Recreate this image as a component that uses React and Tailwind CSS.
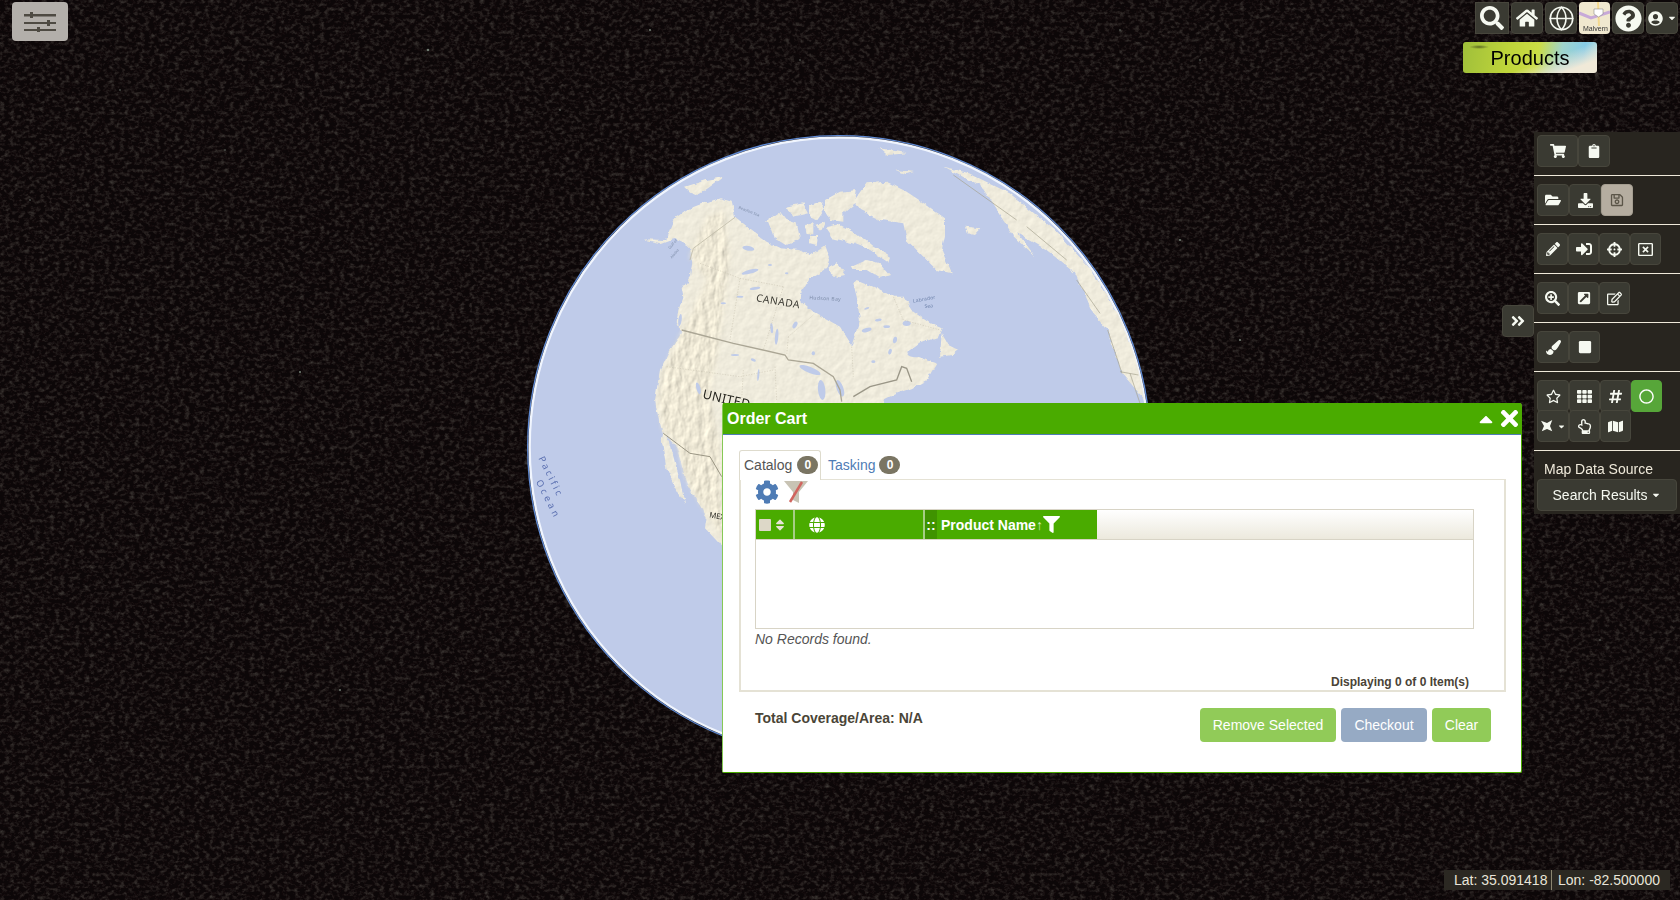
import { Globe } from 'lucide-react';
import {
    FaSearch, FaHome, FaQuestionCircle, FaUserCircle, FaCaretDown, FaCaretUp, FaTimes, FaSort, FaCog, FaFilter, FaGlobe,
    FaShoppingCart, FaClipboard, FaFolderOpen, FaDownload, FaRegSave, FaPencilAlt, FaSignInAlt, FaCrosshairs, FaRegWindowClose,
    FaSearchPlus, FaExternalLinkSquareAlt, FaRegEdit, FaPaintBrush, FaStop, FaRegStar, FaTh, FaHashtag, FaRegCircle,
    FaRegHandPointUp, FaMap, FaAngleDoubleRight,
} from 'react-icons/fa';

const stars = [
    [428, 50, 1.3], [650, 30, 1.1], [225, 150, 0.8], [120, 90, 0.8], [300, 372, 1.1], [130, 330, 0.8], [60, 470, 0.8], [340, 690, 1],
    [1200, 60, 0.8], [1330, 120, 0.8], [1240, 340, 1.1], [1430, 300, 0.8], [1360, 590, 0.8], [1600, 640, 0.8], [210, 600, 0.8], [460, 800, 0.8],
    [980, 850, 0.8], [1120, 30, 0.8], [800, 60, 0.8], [30, 200, 0.8], [560, 110, 0.8], [1180, 240, 1.1], [1300, 800, 0.8], [90, 760, 0.8],
];

const land = [
    // north america
    'M10,178 L75,180 L100,120 L150,85 L190,70 L240,55 L275,65 L285,110 L340,155 L380,185 L420,205 L480,210 L510,225 L555,195 L570,235 L560,265 L510,295 L480,345 L480,360 L520,395 L600,440 L635,495 L640,480 L660,420 L650,350 L640,310 L650,300 L700,320 L760,350 L790,350 L820,395 L870,430 L905,445 L895,470 L840,490 L800,520 L860,540 L890,550 L860,600 L815,625 L770,640 L730,660 L800,800 L300,1120 L245,1098 L195,1045 L200,1010 L140,910 L110,800 L90,780 L68,760 L50,690 L45,660 L60,570 L90,510 L125,460 L110,430 L115,390 L130,350 L125,325 L150,290 L155,240 L150,205 L140,195 L100,175 L60,190 Z',
    'M70,760 L90,790 L120,900 L135,975 L110,930 L80,870 L65,780 Z',
    // arctic islands
    'M135,20 L200,0 L250,-10 L210,20 L175,45 L150,35 Z',
    'M555,145 L600,135 L650,160 L700,200 L750,230 L745,245 L690,210 L640,190 L575,175 Z',
    'M635,260 L680,240 L720,250 L750,285 L720,295 L680,270 L640,270 Z',
    'M565,260 L590,250 L615,285 L590,290 L570,285 Z',
    'M375,125 L420,95 L440,120 L470,130 L480,175 L440,195 L400,170 L385,130 Z',
    'M440,80 L490,70 L505,100 L460,110 Z',
    'M495,135 L520,130 L520,160 L500,160 Z',
    'M510,165 L535,165 L530,195 L510,190 Z',
    'M525,135 L555,125 L545,150 Z',
    'M555,60 L600,35 L650,30 L645,70 L610,100 L610,125 L570,120 L555,95 Z',
    'M510,75 L540,65 L555,85 L530,120 L510,110 Z',
    // greenland, newfoundland, iceland
    'M640,65 L680,10 L740,5 L800,35 L860,75 L915,115 L915,170 L905,210 L935,280 L890,270 L845,225 L800,180 L790,130 L720,120 L660,90 Z',
    'M905,460 L925,495 L955,510 L935,525 L900,530 Z',
    'M975,140 L1024,145 L1005,165 L981,160 Z',
    // europe along the limb
    'M913,-40 L987,-20 L1109,40 L1244,150 L1354,270 L1440,410 L1501,570 L1532,680 L1446,580 L1403,450 L1354,390 L1305,280 L1220,210 L1134,160 L1183,230 L1122,170 L1024,20 Z',
    'M718,-95 L803,-80 L742,-75 Z',
    'M766,-30 L821,-25 L797,-18 Z',
];

const lakes = [
    [330, 275, 26, 6, -15], [325, 205, 18, 7, 10], [345, 325, 16, 4, -10], [410, 470, 5, 24, 5], [395, 445, 4, 15, -5], [465, 435, 6, 11, 30],
    [285, 525, 12, 3, 0], [340, 540, 8, 4, 20], [355, 585, 3, 18, 5], [510, 570, 34, 9, 22], [545, 630, 11, 30, -6], [600, 625, 10, 26, -20],
    [800, 430, 12, 8, 0], [680, 450, 15, 6, -15], [715, 420, 10, 4, -10], [700, 545, 6, 4, 0], [750, 515, 5, 9, 20], [820, 525, 18, 6, 10],
    [120, 420, 5, 18, 8], [150, 260, 5, 20, 12], [680, 385, 8, 3, -20], [740, 440, 10, 4, 0], [390, 255, 6, 3, 0], [440, 280, 5, 3, 0],
    [520, 520, 5, 6, 0], [175, 625, 6, 18, -15], [765, 480, 6, 10, 10], [250, 370, 8, 3, 0], [300, 350, 10, 3, 0],
];

function GlobeMap() {
    return (
        <svg viewBox="-360 -150 1920 1920" className="absolute left-[520px] top-[130px] h-[640px] w-[640px] font-['Noto_Sans',sans-serif]">
            <defs>
                <clipPath id="disc"><circle cx="597" cy="801" r="927" /></clipPath>
                <filter id="relief" x="-5%" y="-5%" width="110%" height="110%" colorInterpolationFilters="sRGB">
                    <feTurbulence type="fractalNoise" baseFrequency="0.04" numOctaves="4" seed="5" result="noise" />
                    <feDisplacementMap in="SourceGraphic" in2="noise" scale="14" xChannelSelector="R" yChannelSelector="G" result="coast" />
                    <feDiffuseLighting in="noise" surfaceScale="0.7" diffuseConstant="1.15" lightingColor="#f0ecdd" result="light">
                        <feDistantLight azimuth="225" elevation="60" />
                    </feDiffuseLighting>
                    <feComposite in="light" in2="coast" operator="in" />
                </filter>
                <filter id="rockies" x="-5%" y="-5%" width="110%" height="110%" colorInterpolationFilters="sRGB">
                    <feGaussianBlur in="SourceGraphic" stdDeviation="8" result="soft" />
                    <feTurbulence type="fractalNoise" baseFrequency="0.05 0.025" numOctaves="4" seed="9" result="noise" />
                    <feDiffuseLighting in="noise" surfaceScale="2.4" diffuseConstant="1.15" lightingColor="#efe9d6" result="light">
                        <feDistantLight azimuth="225" elevation="60" />
                    </feDiffuseLighting>
                    <feComposite in="light" in2="soft" operator="in" />
                </filter>
            </defs>
            <circle cx="597" cy="801" r="934" fill="none" stroke="#5f8ad4" strokeWidth="4" />
            <circle cx="597" cy="801" r="928" fill="#bfcbe9" stroke="#f0f5fe" strokeWidth="7" />
            <g clipPath="url(#disc)">
                <g filter="url(#relief)" fill="#000">
                    {land.map((d) => <path key={d} d={d} />)}
                </g>
                <path filter="url(#rockies)" fill="#000" d="M120,470 L200,300 L150,230 L200,110 L250,90 L270,230 L240,480 L210,640 L240,800 L250,1080 L200,1000 L140,900 L110,790 L70,750 L55,670 L70,570 Z" />
                <g fill="#bfcbe9">
                    {lakes.map(([cx, cy, rx, ry, rot]) => (
                        <ellipse key={`${cx}-${cy}`} cx={cx} cy={cy} rx={rx} ry={ry} transform={`rotate(${rot} ${cx} ${cy})`} />
                    ))}
                </g>
                <g fill="none">
                    <path d="M125,450 L280,490 L435,525 L445,540 L520,550 L580,590 L600,630 L605,665" stroke="#aba695" strokeWidth="4" />
                    <path d="M640,650 L690,620 L770,600 L785,560 L800,565 L815,605" stroke="#9a9687" strokeWidth="4" />
                    <path d="M285,112 L160,205 L150,240" stroke="#c2bdaa" strokeWidth="2.500" />
                    <path d="M70,760 L150,820 L210,830 L245,890" stroke="#9a9583" strokeWidth="3" />
                    <path d="M180,250 L300,295 L430,320 M300,295 L270,480 M430,320 L370,510 M445,470 L520,405 M445,470 L440,525 M635,500 L640,590 M760,350 L790,420 L900,450 M80,560 L300,590 L400,570 M310,570 L305,660 M405,560 L410,660" stroke="#c6c1ae" strokeWidth="1.500" strokeDasharray="4 4" />
                    <path d="M1403,450 L1446,580 M1440,575 L1495,585 M1470,580 L1500,670 M940,-15 L1130,120 M1160,140 L1280,240 M1310,300 L1380,400" stroke="#a5a18e" strokeWidth="2" />
                </g>
                <text x="347" y="364" fontSize="31" fill="#3b3a33" transform="rotate(9 347 364)" letterSpacing="1.500">CANADA</text>
                <text x="508" y="358" fontSize="15" fill="#7d8ca8" transform="rotate(3 508 358)" letterSpacing="1">Hudson Bay</text>
                <text x="820" y="368" fontSize="15" fill="#6f83ab" transform="rotate(-10 820 368)" letterSpacing="0.500">Labrador</text>
                <text x="854" y="384" fontSize="15" fill="#6f83ab" transform="rotate(-6 854 384)">Sea</text>
                <text x="90" y="208" fontSize="11" fill="#7d8ca8" transform="rotate(-50 90 208)">Gulf of</text>
                <text x="96" y="236" fontSize="11" fill="#7d8ca8" transform="rotate(-50 96 236)">Alaska</text>
                <text x="295" y="85" fontSize="11" fill="#7d8ca8" transform="rotate(22 295 85)">Beaufort Sea</text>
                <text x="186" y="654" fontSize="38" fill="#26251f" transform="rotate(13 186 654)" letterSpacing="1">UNITED</text>
                <text x="207" y="1012" fontSize="23" fill="#26251f" transform="rotate(10 207 1012)">MEXICO</text>
                <text x="-305" y="835" fontSize="28" fill="#5a6fb0" transform="rotate(64 -305 835)" letterSpacing="7">Pacific</text>
                <text x="-313" y="905" fontSize="28" fill="#5a6fb0" transform="rotate(63 -313 905)" letterSpacing="9">Ocean</text>
            </g>
        </svg>
    );
}

function Space() {
    return (
        <svg className="absolute left-0 top-0 h-[900px] w-[1680px]">
            <defs>
                <filter id="space" x="0" y="0" width="100%" height="100%" colorInterpolationFilters="sRGB">
                    <feTurbulence type="fractalNoise" baseFrequency="0.2 0.26" numOctaves="3" seed="11" />
                    <feColorMatrix type="matrix" values="0 0 0 0.4 -0.175  0 0 0 0.42 -0.195  0 0 0 0.38 -0.175  0 0 0 0 1" />
                </filter>
            </defs>
            <rect width="1680" height="900" fill="#0c0708" />
            <rect width="1680" height="900" filter="url(#space)" style={{ mixBlendMode: 'screen' }} />
            {stars.map(([x, y, r], i) => <circle key={i} cx={x} cy={y} r={r} fill="#6f7a70" />)}
        </svg>
    );
}

function Tool({ children, active, green, className = 'w-8' }) {
    const tone = green
        ? 'bg-[#57a639] border-[#57a639] text-white'
        : active
            ? 'bg-[#b5ada0] border-[#a49d90] text-[#5b5548]'
            : 'bg-[#3a3a32] border-[#47463c] text-[#f6f9f1]';
    return <div className={`flex h-8 items-center justify-center rounded border ${tone} ${className}`}>{children}</div>;
}

function Section({ children, first, last }) {
    return (
        <div className={`flex flex-wrap pl-[3px] ${first ? 'pt-[3px]' : 'pt-2'} pb-2 ${last ? '' : 'border-b border-[#efe9da]'}`}>
            {children}
        </div>
    );
}

function Sidebar() {
    return (
        <div className="absolute left-[1534px] top-[132px] h-[382px] w-[146px] bg-[#28251f]">
            <Section first>
                <Tool className="w-[41px]"><FaShoppingCart size={16} /></Tool>
                <Tool><FaClipboard size={14} /></Tool>
            </Section>
            <Section>
                <Tool><FaFolderOpen size={16} /></Tool>
                <Tool><FaDownload size={15} /></Tool>
                <Tool active><FaRegSave size={14} /></Tool>
            </Section>
            <Section>
                <Tool className="w-[31px]"><FaPencilAlt size={14} /></Tool>
                <Tool className="w-[31px]"><FaSignInAlt size={16} /></Tool>
                <Tool className="w-[31px]"><FaCrosshairs size={15} /></Tool>
                <Tool className="w-[31px]"><FaRegWindowClose size={15} /></Tool>
            </Section>
            <Section>
                <Tool className="w-[31px]"><FaSearchPlus size={15} /></Tool>
                <Tool className="w-[31px]"><FaExternalLinkSquareAlt size={14} /></Tool>
                <Tool className="w-[31px]"><FaRegEdit size={15} /></Tool>
            </Section>
            <Section>
                <Tool className="w-[32px]"><FaPaintBrush size={15} /></Tool>
                <Tool className="w-[31px]"><FaStop size={14} /></Tool>
            </Section>
            <div className="border-b border-[#efe9da] pb-2 pl-[3px] pt-2">
                <div className="flex h-[30px]">
                    <Tool className="w-[32px]"><FaRegStar size={15} /></Tool>
                    <Tool className="w-[31px]"><FaTh size={15} /></Tool>
                    <Tool className="w-[31px]"><FaHashtag size={15} /></Tool>
                    <Tool green className="w-[31px]"><FaRegCircle size={15} /></Tool>
                </div>
                <div className="flex">
                    <Tool className="w-[32px] gap-1">
                        <svg viewBox="0 0 16 16" className="h-3 w-3" fill="currentColor"><path d="M0 1 L8 4 L15 0 L12 8 L15 15 L8 12 L1 15 L4 8 Z" /></svg>
                        <FaCaretDown size={9} />
                    </Tool>
                    <Tool className="w-[31px]"><FaRegHandPointUp size={15} /></Tool>
                    <Tool className="w-[31px]"><FaMap size={15} /></Tool>
                </div>
            </div>
            <div className="pl-[10px] pt-2 text-sm leading-5 text-[#efe9da]">Map Data Source</div>
            <div className="pl-[3px]">
                <Tool className="w-[140px] gap-1 text-sm"><span>Search Results</span><FaCaretDown size={10} /></Tool>
            </div>
        </div>
    );
}

function TopBar() {
    return (
        <div className="absolute right-[2px] top-[2px] flex gap-[2px]">
            <Tool className="w-[34px] !rounded-none"><FaSearch size={24} /></Tool>
            <Tool><FaHome size={22} /></Tool>
            <Tool><Globe size={27} strokeWidth={1.4} /></Tool>
            <div className="relative h-8 w-[31px] overflow-hidden rounded bg-[#f0e8cf]">
                <svg viewBox="0 0 31 32" className="h-full w-full">
                    <path d="M0 11 L12 16 L31 10" stroke="#c7a9d8" strokeWidth="3" fill="none" />
                    <path d="M19 0 L20 24" stroke="#f3d98f" strokeWidth="2" />
                    <path d="M15 7 h9 v5 l-4.500 3 l-4.500 -3 Z" fill="#fff" stroke="#777" strokeWidth="0.500" />
                </svg>
                <span className="absolute bottom-[1px] left-[4px] text-[7px] leading-[9px] text-[#333]">Malvern</span>
            </div>
            <Tool><FaQuestionCircle size={27} /></Tool>
            <Tool className="w-[32px] gap-1"><FaUserCircle size={15} /><FaCaretDown size={10} /></Tool>
        </div>
    );
}

function Cart() {
    return (
        <div className="absolute left-[722px] top-[403px] flex h-[370px] w-[800px] flex-col rounded-t-[3px] rounded-b-[2px] border-b border-l border-r border-[#4aab00] border-l-[#86c956] bg-white">
            <div className="flex h-[32px] shrink-0 items-center justify-between border-b border-[#4f7cb5] bg-[#4aab00] pl-1 text-white">
                <span className="text-base font-bold">Order Cart</span>
                <div className="-mr-px flex items-center">
                    <FaCaretUp size={22} />
                    <FaTimes size={25} />
                </div>
            </div>
            <div className="px-4 pt-[15px]">
                <div className="relative z-10 flex h-[30px] items-stretch">
                    <div className="flex w-[82px] items-center gap-[5px] rounded-t-[3px] border border-b-0 border-[#dedbcd] bg-white pb-px pl-[4px] text-sm text-[#555]">
                        Catalog
                        <span className="flex h-[18px] w-[21px] items-center justify-center rounded-full bg-[#7a7563] text-xs font-bold text-white">0</span>
                    </div>
                    <div className="flex items-center gap-[4px] pl-[7px] text-sm text-[#4f7cb5]">
                        Tasking
                        <span className="flex h-[18px] w-[21px] items-center justify-center rounded-full bg-[#7a7563] text-xs font-bold text-white">0</span>
                    </div>
                </div>
                <div className="-mt-px flex h-[213px] w-[767px] flex-col border border-b-2 border-l-2 border-r-2 border-[#e5e2d5] pl-[14px]">
                    <div className="flex h-[29px] shrink-0 items-start gap-[5px]">
                        <FaCog size={24} className="text-[#4f7cb5]" />
                        <svg viewBox="0 0 24 24" className="h-6 w-6">
                            <path d="M0 1 H24 L15 12 V23 L9 20 V12 Z" fill="#c8c3b4" />
                            <path d="M6 22 L18 2" stroke="#d0655f" strokeWidth="2.500" />
                        </svg>
                    </div>
                    <div className="flex h-[120px] w-[719px] shrink-0 flex-col border border-[#d8d4c6]">
                        <div className="flex h-[30px] shrink-0 border-b border-[#d8d4c6] bg-gradient-to-b from-white to-[#ece9dd]">
                            <div className="flex w-[39px] items-center gap-[2px] border-r-2 border-[#a6ce84] bg-[#4aab00] pl-[3px] text-[#e7e4d6]">
                                <span className="h-3 w-3 rounded-[1px] bg-[#ddd8c8]" />
                                <FaSort size={14} />
                            </div>
                            <div className="flex w-[130px] items-center border-r-2 border-[#a6ce84] bg-[#4aab00] pl-[14px] text-white">
                                <FaGlobe size={16} />
                            </div>
                            <div className="flex w-[172px] items-center bg-[#4aab00] text-sm font-bold text-white">
                                <span className="flex h-full w-3 items-center justify-center bg-[#3f9300]">::</span>
                                <span className="pl-1">Product Name</span>
                                <span className="text-sm font-normal text-[#d6eec2]">↑</span>
                                <FaFilter size={17} />
                            </div>
                        </div>
                    </div>
                    <div className="text-sm italic leading-5 text-[#555]">No Records found.</div>
                    <div className="mt-auto pr-[35px] text-right text-xs font-bold leading-4 text-[#4a4337]">Displaying 0 of 0 Item(s)</div>
                </div>
                <div className="flex w-[767px] items-start justify-between pl-4 pr-[15px] pt-4">
                    <span className="text-sm font-bold leading-5 text-[#4a4537]">Total Coverage/Area: N/A</span>
                    <div className="flex gap-[5px] text-sm text-white">
                        <div className="flex h-[34px] w-[136px] items-center justify-center rounded bg-[#91cb58]">Remove Selected</div>
                        <div className="flex h-[34px] w-[86px] items-center justify-center rounded bg-[#96aac4]">Checkout</div>
                        <div className="flex h-[34px] w-[59px] items-center justify-center rounded bg-[#91cb58]">Clear</div>
                    </div>
                </div>
            </div>
        </div>
    );
}

export default function App() {
    return (
        <div className="relative h-[900px] w-[1680px] overflow-hidden bg-[#0c0708] font-['Liberation_Sans',Arial,sans-serif]">
            <Space />
            <GlobeMap />

            <div className="absolute left-3 top-[2px] flex h-[39px] w-[56px] items-center justify-center rounded bg-[#b3afaa]">
                <svg viewBox="0 0 32 20" className="h-[20px] w-[32px]" fill="#4e4a42">
                    <rect x="0" y="2" width="32" height="2.500" />
                    <rect x="6" y="0" width="3" height="6" />
                    <rect x="0" y="10" width="32" height="2" />
                    <rect x="23" y="8" width="3" height="6" />
                    <rect x="0" y="17" width="32" height="2" />
                    <rect x="13" y="15" width="3" height="5" />
                </svg>
            </div>

            <TopBar />

            <div className="absolute left-[1463px] top-[42px] flex h-[31px] w-[134px] items-center justify-center rounded-[3px] bg-[radial-gradient(ellipse_10px_2px_at_12%_16%,#5b6a20,transparent),linear-gradient(160deg,transparent_60%,#f0e9d8_84%),linear-gradient(100deg,#9fbf3a_0%,#bfd53a_35%,#cbdc45_55%,#9fd4cc_72%,#86cbe6_88%,#b9dfe0_100%)] text-xl text-black">
                Products
            </div>

            <div className="absolute left-[1502px] top-[305px] flex h-8 w-8 items-center justify-center rounded border border-[#47463c] bg-[#3a3a32] text-[#f6f9f1]">
                <FaAngleDoubleRight size={16} />
            </div>

            <Sidebar />
            <Cart />

            <div className="absolute left-[1444px] top-[870px] flex h-5 w-[226px] items-center bg-[#2b2822] text-sm text-[#e8e4d8]">
                <span className="w-[108px] border-r border-[#8a8570] pl-[10px] leading-5">Lat: 35.091418</span>
                <span className="pl-[6px]">Lon: -82.500000</span>
            </div>
        </div>
    );
}
